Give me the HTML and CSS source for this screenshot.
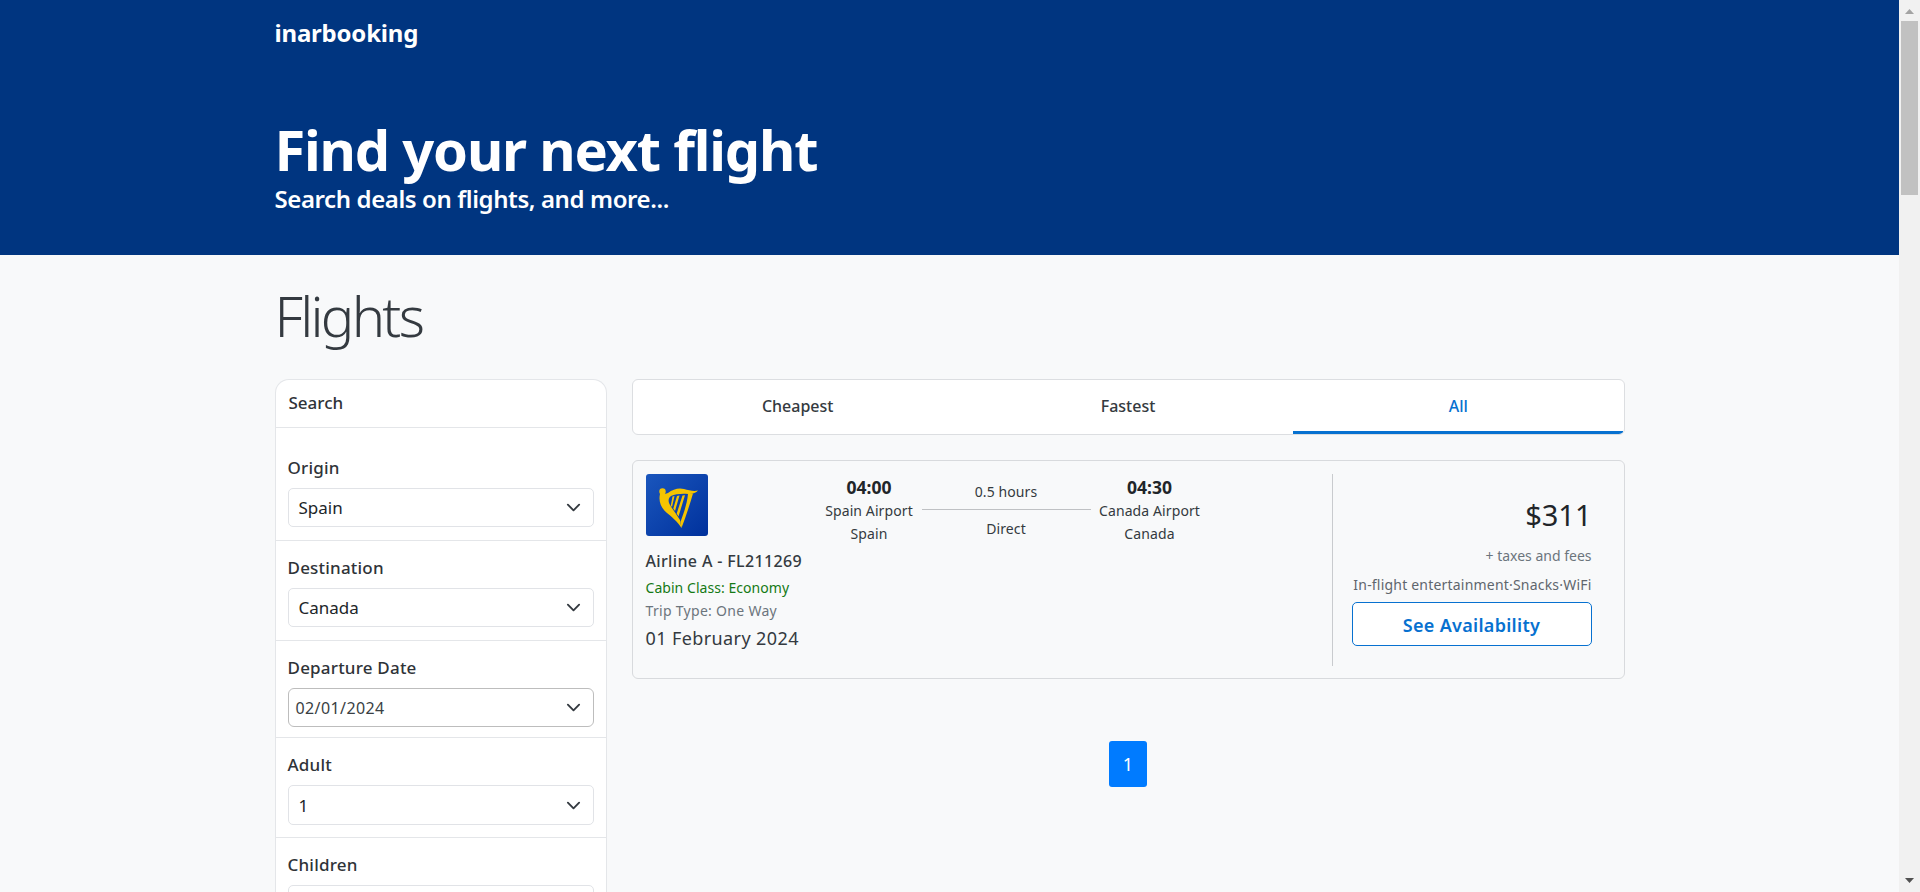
FILE: index.html
```html
<!DOCTYPE html>
<html lang="en">
<head>
<meta charset="utf-8">
<title>inarbooking</title>
<link rel="stylesheet" href="styles.css">
</head>
<body>
<div class="page">
  <header class="hero">
    <div class="container">
      <div class="brand">inarbooking</div>
      <h1 class="hero-title">Find your next flight</h1>
      <p class="hero-sub">Search deals on flights, and more...</p>
    </div>
  </header>
  <main class="container">
    <h2 class="page-title">Flights</h2>
    <div class="layout">
      <aside class="search">
        <div class="search-head">Search</div>
        <div class="field field-first">
          <div class="field-label">Origin</div>
          <div class="select"><span>Spain</span><svg class="chev" viewBox="0 0 16 16"><path d="M2 5l6 6 6-6"/></svg></div>
        </div>
        <div class="field">
          <div class="field-label">Destination</div>
          <div class="select"><span>Canada</span><svg class="chev" viewBox="0 0 16 16"><path d="M2 5l6 6 6-6"/></svg></div>
        </div>
        <div class="field field-date">
          <div class="field-label">Departure Date</div>
          <div class="select select-date"><span>02/01/2024</span><svg class="chev" viewBox="0 0 16 16"><path d="M2 5l6 6 6-6"/></svg></div>
        </div>
        <div class="field">
          <div class="field-label">Adult</div>
          <div class="select select-tall"><span>1</span><svg class="chev" viewBox="0 0 16 16"><path d="M2 5l6 6 6-6"/></svg></div>
        </div>
        <div class="field">
          <div class="field-label">Children</div>
          <div class="select"></div>
        </div>
      </aside>
      <section class="results">
        <nav class="tabs">
          <div class="tab">Cheapest</div>
          <div class="tab">Fastest</div>
          <div class="tab tab-active">All</div>
        </nav>
        <article class="flight">
          <div class="flight-info">
            <div class="airline">
              <svg class="logo" viewBox="0 0 62 62">
                <defs><linearGradient id="lg" x1="0" y1="0" x2="1" y2="1"><stop offset="0" stop-color="#1a56bd"/><stop offset="1" stop-color="#00319c"/></linearGradient></defs>
                <rect width="62" height="62" rx="3" fill="url(#lg)"/>
                <circle cx="16.500" cy="17.500" r="3.200" fill="#f5c400"/>
                <path fill="#f5c400" d="M14 20C18 20 20 20 22 19C27 15 33 13.500 38 15C43 16.500 48 17.500 52 16.500C50 19 46 20.500 42 20C36 19.500 29 20 25 22C22 24 22 28 24 31C27 36 31 41 34 46L35.500 54C31 47 26 43 21 39C16 35 12 28 14 20z"/>
                <path fill="#f5c400" d="M42 20L47 19.500C44 30 40 42 35.500 54L34.500 48C38 38 41 30 42 20z"/>
                <path fill="#f5c400" d="M26.500 22.500L28.500 22L26 33L24.800 31.500zM31 22L33.500 21.500L29 37L27.300 34.500zM36.500 21.500L39 21.200L32.500 42.500L30.700 39.500z"/>
              </svg>
              <div class="airline-name">Airline A - FL211269</div>
              <div class="cabin">Cabin Class: Economy</div>
              <div class="trip">Trip Type: One Way</div>
              <div class="date">01 February 2024</div>
            </div>
            <div class="route">
              <div class="stop">
                <div class="time">04:00</div>
                <div>Spain Airport</div>
                <div>Spain</div>
              </div>
              <div class="leg">
                <div class="leg-top">0.5 hours</div>
                <div class="leg-bottom">Direct</div>
              </div>
              <div class="stop stop-end">
                <div class="time">04:30</div>
                <div>Canada Airport</div>
                <div>Canada</div>
              </div>
            </div>
          </div>
          <div class="pricing">
            <div class="price">$311</div>
            <div class="taxes">+ taxes and fees</div>
            <div class="perks">In-flight entertainment·Snacks·WiFi</div>
            <button class="cta">See Availability</button>
          </div>
        </article>
        <div class="pager"><span class="page-num">1</span></div>
      </section>
    </div>
  </main>
</div>
<div class="scrollbar">
  <svg class="sb-arrow" viewBox="0 0 9 5"><path fill="#a3a3a3" d="M4.500 0L9 5H0z"/></svg>
  <div class="sb-thumb"></div>
  <svg class="sb-arrow sb-down" viewBox="0 0 9 5"><path fill="#505050" d="M0 0h9L4.500 5z"/></svg>
</div>
</body>
</html>
```
FILE: styles.css
```css
* { box-sizing: border-box; }
html, body { margin: 0; height: 892px; overflow: hidden; }
body {
  display: flex;
  font-family: "Noto Sans", "Open Sans", "Liberation Sans", sans-serif;
  color: #212529;
  background: #f8f9fa;
}
.page { flex: 1; min-width: 0; height: 892px; overflow: hidden; }
.container { width: 1350px; margin: 0 auto; }
.hero { height: 255px; background: #003580; color: #fff; }
.brand { padding-top: 17px; font-size: 24px; line-height: 32px; font-weight: 700; letter-spacing: -.2px; }
.hero-title { margin: 73px 0 0; font-size: 56px; line-height: 54px; font-weight: 700; letter-spacing: -1.2px; }
.hero-sub { margin: 8px 0 0; font-size: 24px; line-height: 30px; font-weight: 600; letter-spacing: -.4px; }
.page-title { margin: 0; padding-top: 25px; height: 124px; font-size: 56px; line-height: 70px; font-weight: 300; letter-spacing: -2.7px; color: #343a40; }
.layout { display: flex; gap: 25px; align-items: flex-start; }
.search { flex: 0 0 332px; background: #fff; border: 1px solid #e4e6e9; border-bottom: 0; border-radius: 14px 14px 0 0; }
.search-head { height: 48px; padding: 0 12px 0 13px; font-size: 17px; line-height: 46px; font-weight: 500; letter-spacing: 0; color: #2f3338; border-bottom: 1px solid #e4e6e9; }
.field { height: 100px; padding: 14px 12px 0; border-bottom: 1px solid #e4e6e9; }
.field-first { height: 113px; padding-top: 27px; }
.field-date { height: 97px; }
.field:last-child { border-bottom: 0; height: 90px; }
.field-label { height: 33px; font-size: 17px; line-height: 25px; font-weight: 500; letter-spacing: .2px; color: #2f3338; }
.select { display: flex; align-items: center; justify-content: space-between; height: 39px; padding: 0 12px 0 10px; background: #fff; border: 1px solid #e1e3e7; border-radius: 5px; font-size: 17px; letter-spacing: 0; }
.select-tall { height: 40px; }
.select-date { padding-left: 7px; border-color: #bdbdbd; border-radius: 6px; color: #3a3f44; font-size: 16px; letter-spacing: .4px; }
.chev { width: 15px; height: 15px; fill: none; stroke: #343a40; stroke-width: 2; stroke-linecap: round; stroke-linejoin: round; }
.results { flex: 0 0 993px; }
.tabs { display: flex; height: 56px; background: #fff; border: 1px solid #dcdee1; border-radius: 6px; overflow: hidden; }
.tab { flex: 1; text-align: center; font-size: 16px; line-height: 52px; font-weight: 500; letter-spacing: 0; color: #343a40; }
.tab-active { color: #0771d0; border-bottom: 3px solid #0771d0; }
.flight { display: flex; justify-content: space-between; height: 219px; margin-top: 25px; padding: 13px 32px 12px 13px; border: 1px solid #d8dadd; border-radius: 6px; }
.flight-info { display: flex; }
.airline { width: 171px; }
.logo { display: block; width: 62px; height: 62px; }
.airline-name { margin-top: 13px; font-size: 16px; line-height: 24px; font-weight: 500; letter-spacing: .35px; color: #343a40; white-space: nowrap; }
.cabin { margin-top: 3px; font-size: 14px; line-height: 24px; color: #157a15; letter-spacing: .05px; white-space: nowrap; }
.trip { font-size: 14px; line-height: 22px; color: #6c757d; letter-spacing: .3px; white-space: nowrap; }
.date { margin-top: 3px; font-size: 18px; line-height: 26px; color: #343a40; letter-spacing: .4px; white-space: nowrap; }
.route { display: flex; font-size: 14px; letter-spacing: .1px; }
.stop { width: 105px; text-align: center; color: #343a40; line-height: 23px; padding-top: 1px; }
.stop-end { width: 118px; }
.time { font-size: 17.500px; line-height: 24px; font-weight: 700; color: #212529; letter-spacing: 0; }
.leg { width: 169px; height: 61px; text-align: center; color: #343a40; }
.leg-top { height: 36px; line-height: 26px; padding-top: 5px; border-bottom: 1px solid #bfc1c4; }
.leg-bottom { line-height: 28px; padding-top: 5px; }
.pricing { width: 260px; padding-left: 19px; border-left: 1px solid #c9cbce; text-align: right; }
.price { margin-top: 19px; font-size: 29px; line-height: 44px; letter-spacing: 0; }
.taxes { margin-top: 7px; font-size: 14px; line-height: 24px; color: #6c757d; letter-spacing: 0; }
.perks { margin-top: 5px; font-size: 14px; line-height: 24px; color: #5f666d; letter-spacing: .2px; white-space: nowrap; }
.cta { display: block; width: 240px; height: 44px; margin-top: 5px; padding: 2px 0 0; background: #fff; border: 1px solid #0771d0; border-radius: 5px; color: #0771d0; font: 600 18px "Noto Sans", sans-serif; letter-spacing: .3px; }
.pager { display: flex; justify-content: center; margin-top: 62px; }
.page-num { width: 38px; height: 46px; background: #007bff; color: #fff; border-radius: 3px; font-size: 18px; line-height: 46px; text-align: center; }
.scrollbar { flex: 0 0 21px; height: 892px; background: #f1f1f1; display: flex; flex-direction: column; align-items: center; padding-top: 9px; }
.sb-arrow { width: 9px; height: 5px; flex: none; }
.sb-thumb { width: 17px; height: 174px; margin-top: 7px; background: #c1c1c1; flex: none; }
.sb-down { margin-top: auto; margin-bottom: 9px; }
```
